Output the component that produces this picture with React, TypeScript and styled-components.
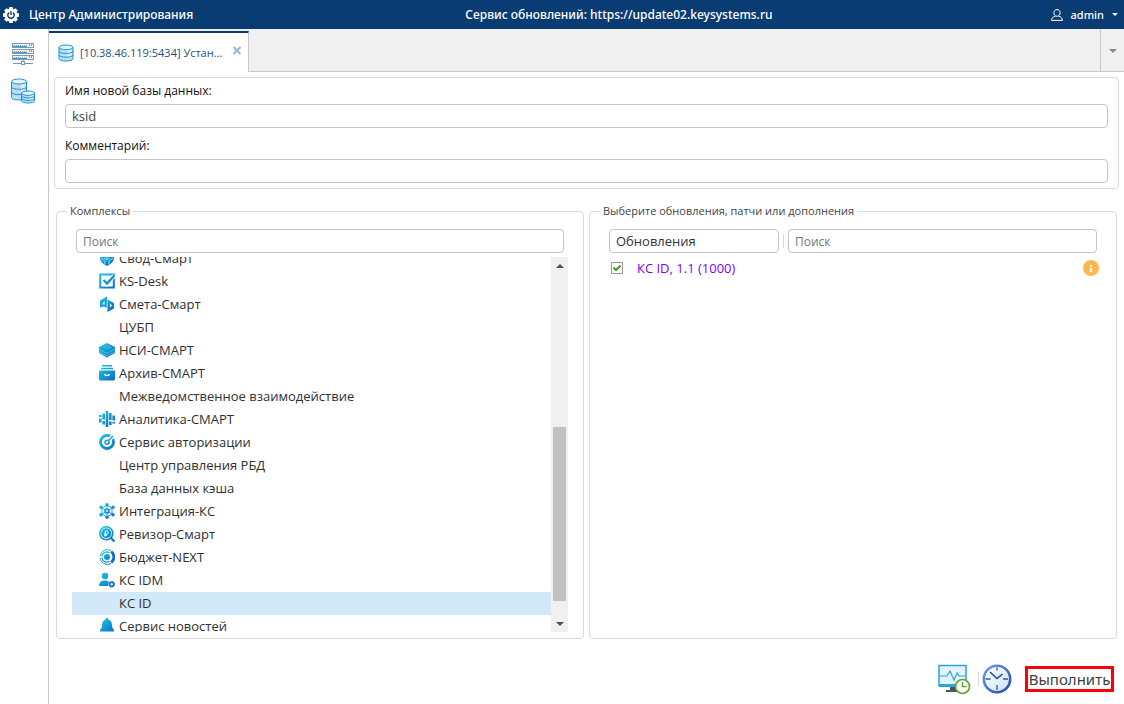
import React, { ReactNode, useLayoutEffect, useRef, useState } from "react";
import styled, { createGlobalStyle } from "styled-components";

const GlobalStyle = createGlobalStyle`
  *, *::before, *::after { box-sizing: border-box; }
  body {
    margin: 0;
    background: #fff;
    color: #333;
    font: 13px/18px "Open Sans", "Noto Sans", sans-serif;
  }
  button, input, select { font: inherit; color: inherit; }
`;

const Page = styled.div`
  display: flex;
  flex-direction: column;
  height: 100vh;
`;

const Header = styled.header`
  display: flex;
  justify-content: space-between;
  align-items: center;
  height: 29px;
  flex: none;
  padding: 0 6px 0 3px;
  background: #0a3c74;
  color: #fff;
  font-family: "Noto Sans", "Open Sans", sans-serif;
  font-size: 12px;
  font-weight: 500;
`;

const Brand = styled.div`
  display: flex;
  align-items: center;
  gap: 10px;
`;

const UserButton = styled.button`
  display: flex;
  align-items: center;
  gap: 8px;
  padding: 0 0 0 6px;
  border: 0;
  background: none;
  font-size: 11px;
`;

const Body = styled.div`
  display: flex;
  flex: 1;
  min-height: 0;
`;

const Sidebar = styled.nav`
  display: flex;
  flex-direction: column;
  align-items: center;
  gap: 13px;
  width: 49px;
  flex: none;
  padding: 14px 2px 0 0;
  border-right: 1px solid #c8c8c8;
`;

const IconButton = styled.button`
  display: flex;
  padding: 0;
  border: 0;
  background: none;
`;

const Main = styled.main`
  display: flex;
  flex-direction: column;
  flex: 1;
  min-width: 0;
`;

const TabBar = styled.div`
  display: flex;
  height: 43px;
  flex: none;
  background: linear-gradient(#c8c8c8, #c8c8c8) bottom / 100% 1px no-repeat #f0f0f0;
`;

const Tab = styled.div`
  display: flex;
  align-items: center;
  width: 200px;
  margin-top: 2px;
  padding: 0 6px 0 9px;
  border-top: 2px solid #0a3c74;
  border-right: 1px solid #c8c8c8;
  background: #fff;
  color: #1f4e7f;
`;

const TabTitle = styled.span`
  flex: 1;
  min-width: 0;
  margin-left: 6px;
  white-space: nowrap;
  font-size: 11px;
`;

const TabClose = styled(IconButton)`
  margin-bottom: 4px;
`;

const TabMenu = styled.button`
  display: flex;
  align-items: center;
  justify-content: center;
  width: 24px;
  margin-left: auto;
  padding: 0;
  border: 0;
  border-left: 1px solid #c8c8c8;
  background: none;
`;

const DatabaseForm = styled.form`
  display: flex;
  flex-direction: column;
  gap: 9px;
  flex: none;
  margin: 5px 5px 0;
  padding: 4px 10px 5px;
  border: 1px solid #dadada;
  border-radius: 4px;
`;

const Field = styled.label`
  display: flex;
  flex-direction: column;
  gap: 4px;
  color: #111;
  font-size: 12px;
`;

const TextInput = styled.input`
  width: 100%;
  min-width: 0;
  height: 24px;
  padding: 0 6px;
  border: 1px solid #c4c4c4;
  border-radius: 4px;
  outline: 0;
  background: #fff;
  color: #404040;
  font-size: 13px;
  &::placeholder { color: #757575; opacity: 1; }
`;

const SearchInput = styled(TextInput)`
  font-size: 12px;
`;

const Panels = styled.div`
  display: grid;
  grid-template-columns: 1fr 1fr;
  gap: 5px;
  flex: 1;
  min-height: 0;
  padding: 13px 7px 0;
`;

const Panel = styled.fieldset`
  display: flex;
  flex-direction: column;
  min-width: 0;
  min-height: 0;
  margin: 0;
  padding: 9px 15px 6px;
  border: 1px solid #dadada;
  border-radius: 4px;
`;

const PanelTitle = styled.legend`
  margin-left: -5px;
  padding: 0 3px;
  font-size: 11px;
  line-height: 18px;
  color: #444;
`;

const SearchRow = styled.div`
  display: flex;
  align-items: center;
  flex: none;
  padding: 0 4px;
`;

const KindSelect = styled.select`
  width: 170px;
  height: 24px;
  flex: none;
  padding: 0 6px;
  border: 1px solid #c4c4c4;
  border-radius: 4px;
  appearance: none;
  background: #fff;
  color: #333;
`;

const Separator = styled.span`
  width: 1px;
  height: 14px;
  flex: none;
  margin: 0 4px;
  background: #dadada;
`;

const ListArea = styled.div`
  display: flex;
  flex: 1;
  min-height: 0;
  margin-top: 4px;
`;

const List = styled.ul`
  flex: 1;
  min-width: 0;
  margin: 0;
  padding: 0;
  list-style: none;
  overflow-y: scroll;
  scrollbar-width: none;
`;

const ListRow = styled.li<{ $selected: boolean }>`
  display: grid;
  grid-template-columns: 16px 1fr;
  align-items: center;
  gap: 4px;
  height: 23px;
  padding: 0 0 1px 27px;
  background: ${(p) => (p.$selected ? "#d2e9f9" : "transparent")};
  color: #303030;
`;

const RowText = styled.span`
  grid-column: 2;
`;

const ScrollTrack = styled.div`
  display: flex;
  flex-direction: column;
  align-items: center;
  width: 17px;
  flex: none;
  background: #f0f0f0;
`;

const ScrollSpace = styled.div<{ $grow: number }>`
  flex: ${(p) => p.$grow};
`;

const ScrollThumb = styled.div`
  width: 13px;
  flex: 174;
  background: #c1c1c1;
`;

const ScrollButton = styled.button`
  display: flex;
  align-items: center;
  justify-content: center;
  width: 17px;
  height: 17px;
  flex: none;
  padding: 0;
  border: 0;
  background: none;
`;

const UpdateRow = styled.div`
  display: flex;
  align-items: center;
  justify-content: space-between;
  height: 30px;
  padding: 0 2px 0 6px;
`;

const UpdateLabel = styled.label`
  display: flex;
  align-items: center;
  gap: 14px;
  color: #7a00ff;
`;

const Checkbox = styled.input`
  width: 12px;
  height: 12px;
  margin: 0;
  border: 1px solid #999;
  appearance: none;
  background: #fff;
`;

const CheckHolder = styled.span`
  display: grid;
  & > * { grid-area: 1 / 1; }
  & > svg { pointer-events: none; visibility: hidden; }
  & > input:checked + svg { visibility: visible; }
`;

const Footer = styled.footer`
  display: flex;
  align-items: center;
  justify-content: flex-end;
  height: 65px;
  flex: none;
  padding: 15px 10px 0 0;
`;

const FooterSeparator = styled(Separator)`
  margin: 0 3px 0 7px;
`;

const RunButton = styled.button`
  height: 26px;
  min-width: 89px;
  margin-left: 13px;
  padding: 0;
  border: 3px solid #fb0007;
  background: #fff;
  color: #404040;
  font-family: "Noto Sans", "Open Sans", sans-serif;
  font-size: 15px;
  line-height: 18px;
`;

const Caret = ({ color, up = false, w = 8 }: { color: string; up?: boolean; w?: number }) => (
  <svg width={w} height={w / 2} viewBox="0 0 8 4" aria-hidden="true">
    <path d={up ? "M0 4L4 0l4 4z" : "M0 0h8L4 4z"} fill={color} />
  </svg>
);

const GearPower = () => (
  <svg width="16" height="16" viewBox="0 0 16 16" aria-hidden="true">
    <circle cx="8" cy="8" r="6.3" fill="#fff" />
    <g fill="#fff">
      {[0, 45, 90, 135, 180, 225, 270, 315].map((a) => (
        <path key={a} d="M6.3 0h3.4l.5 3H5.8z" transform={`rotate(${a} 8 8)`} />
      ))}
    </g>
    <path d="M6 5.600a3.200 3.200 0 1 0 4 0" fill="none" stroke="#0a3c74" strokeWidth="1.400" />
    <path d="M8 4.300v3.800" stroke="#0a3c74" strokeWidth="1.400" />
  </svg>
);

const UserGlyph = () => (
  <svg width="12" height="12" viewBox="0 0 12 12" fill="none" stroke="#fff" aria-hidden="true">
    <path d="M6 .6c2 0 3.1 1.300 3.100 3.200S7.900 7.300 6 7.300 2.900 5.700 2.900 3.800 4 .6 6 .6z" />
    <path d="M4.300 7.200C2 7.800.8 8.800.6 11.400h10.800c-.2-2.600-1.400-3.600-3.700-4.200" />
  </svg>
);

const Cylinder = ({ x, y, w, h }: { x: number; y: number; w: number; h: number }) => {
  const r = w / 2;
  const ry = w / 6;
  const arc = (cy: number) => `M${x} ${cy}a${r} ${ry} 0 0 0 ${w} 0`;
  const top = y + ry;
  const bottom = y + h - ry;
  const step = (bottom - top) / 3;
  return (
    <g stroke="#2093d6" fill="none">
      <path d={`M${x} ${top}V${bottom}a${r} ${ry} 0 0 0 ${w} 0V${top}z`} fill="#b9def5" />
      <path d={`M${x + w * 0.62} ${top}h${w * 0.26}v${h - ry * 2.4}h${-w * 0.26}z`} fill="#dff1fb" stroke="none" />
      <ellipse cx={x + r} cy={top} rx={r} ry={ry} fill="#e6f4fc" />
      <path d={arc(top + step)} />
      <path d={arc(top + step * 2)} />
    </g>
  );
};

const DatabaseGlyph = () => (
  <svg width="16" height="18" viewBox="0 0 16 18" aria-hidden="true">
    <Cylinder x={1} y={1} w={14} h={16} />
  </svg>
);

const DatabasesGlyph = () => (
  <svg width="26" height="26" viewBox="0 0 26 26" aria-hidden="true">
    <Cylinder x={1.5} y={1} w={15} h={21} />
    <Cylinder x={11.5} y={13} w={13} h={12} />
  </svg>
);

const ServersGlyph = () => (
  <svg width="22" height="22" viewBox="0 0 22 22" aria-hidden="true">
    {[0, 6, 12].map((y) => (
      <g key={y}>
        <rect x="0" y={y} width="22" height="5" fill="#8699a8" />
        <rect x="1" y={y + 1} width="20" height="3" fill="#eef3f7" />
        <path d={`M2 ${y + 2.5}h5`} stroke="#8699a8" strokeDasharray="1 1" />
        <path d={`M8 ${y + 2.5}h7`} stroke="#9fb0bd" strokeDasharray="1 1" />
        <path d={`M1 ${y + 3.5}h14`} stroke="#2f9fe2" />
        <path d={`M17 ${y + 2}h1`} stroke="#62b0e0" strokeWidth="2" />
        <path d={`M19 ${y + 2}h1`} stroke="#e8795c" strokeWidth="2" />
      </g>
    ))}
    <path d="M11 17v2M1 20.500h8m4 0h8" stroke="#8094a5" />
    <rect x="9.500" y="18.500" width="3" height="3" fill="#fff" stroke="#8094a5" />
  </svg>
);

const CloseGlyph = () => (
  <svg width="10" height="9" viewBox="0 0 10 9" aria-hidden="true">
    <path d="M1.500 1l7 7m0-7l-7 7" stroke="#9eb1c7" strokeWidth="2" />
  </svg>
);

const CheckGlyph = () => (
  <svg width="12" height="12" viewBox="0 0 12 12" aria-hidden="true">
    <path d="M2.500 5.500l2.500 2.500 4.500-4.500" fill="none" stroke="#4f9a1c" strokeWidth="2.200" />
  </svg>
);

const InfoGlyph = () => (
  <svg width="16" height="16" viewBox="0 0 16 16" aria-hidden="true">
    <circle cx="8" cy="8" r="8" fill="#ffb74d" />
    <path d="M7 5h2v1.500H7zM7 8h2v4H7z" fill="#fff" stroke="#fff" strokeWidth=".3" />
  </svg>
);

const MonitorGlyph = () => (
  <svg width="33" height="31" viewBox="0 0 33 31" aria-hidden="true">
    <path d="M12 22h6v4h3v2H8v-2h4z" fill="#4b5258" />
    <rect x="1" y="1.500" width="27" height="20" fill="#e3f5fe" stroke="#2ba3dd" strokeWidth="1.500" />
    <path d="M1 21.500h27" stroke="#2ba3dd" strokeWidth="3" />
    <path d="M2 12h7l3-5 4 9 3-7 2 3h6" fill="none" stroke="#2ba3dd" strokeWidth="1.200" />
    <circle cx="24.500" cy="22.500" r="7" fill="#fff" stroke="#62a331" strokeWidth="1.700" />
    <path d="M24.500 18V22.500h4" fill="none" stroke="#62a331" strokeWidth="1.500" />
  </svg>
);

const ClockGlyph = () => (
  <svg width="30" height="30" viewBox="0 0 30 30" aria-hidden="true">
    <defs>
      <linearGradient id="clock-rim" x1="0" y1="0" x2="1" y2="1">
        <stop offset="0" stopColor="#6f9dea" />
        <stop offset="1" stopColor="#244aa6" />
      </linearGradient>
      <linearGradient id="clock-face" x1="0" y1="0" x2="1" y2="1">
        <stop offset="0" stopColor="#fff" />
        <stop offset="1" stopColor="#c9e3f8" />
      </linearGradient>
    </defs>
    <circle cx="15" cy="15" r="13.200" fill="url(#clock-face)" stroke="url(#clock-rim)" strokeWidth="2.600" />
    <path d="M15 3.500v3M15 21v5M3.500 15h5M21 15h5" stroke="#35589f" strokeWidth="1.300" />
    <path d="M8 8l7 6.500L20.500 10" fill="none" stroke="#23499b" strokeWidth="1.600" />
  </svg>
);

const G = "url(#product-blue)";

const ProductIcon = ({ children }: { children: ReactNode }) => (
  <svg width="16" height="16" viewBox="0 0 16 16" fill={G} aria-hidden="true">
    <defs>
      <linearGradient id="product-blue" gradientUnits="userSpaceOnUse" x1="2" y1="1" x2="14" y2="15">
        <stop offset="0" stopColor="#1cc4dc" />
        <stop offset="1" stopColor="#0a70c9" />
      </linearGradient>
    </defs>
    {children}
  </svg>
);

const icons: Record<string, ReactNode> = {
  shield: (
    <>
      <path d="M1 2l7 3 7-3v6c0 3-3 6-7 8-4-2-7-5-7-8z" />
      <path d="M2 8l4 3v3M14 8l-4 3v3M8 6v4l-3-2m3 2l3-2" fill="none" stroke="#a6e2f4" strokeWidth=".9" />
    </>
  ),
  check: (
    <>
      <path d="M1.200 1.500h13.600v13H1.200z" fill="none" stroke={G} strokeWidth="2" />
      <path d="M4.500 7l3.500 4 7-8.500" fill="none" stroke="#fff" strokeWidth="4" />
      <path d="M4.500 7l3.500 3.500 7.300-8" fill="none" stroke={G} strokeWidth="2.400" />
    </>
  ),
  book: (
    <>
      <path d="M1 4.500L8 .5v4L7.500 12 5 10.500l-4 1z" />
      <path d="M8.500 3.500L15 7v5.500L8.500 16z" />
      <path d="M5.500 5v4L3.500 8zM11 7.500v4l2-2z" fill="#fff" />
    </>
  ),
  layers: (
    <>
      <path d="M0 5l8-4 8 4v6l-8 4.500L0 11z" />
      <path d="M0 7.300l8 4 8-4M0 9.700l8 4 8-4M4 4.500l6 3m-3.500-4.500l5.500 3" fill="none" stroke="#77d6ee" strokeWidth=".6" />
    </>
  ),
  archive: (
    <>
      <path d="M3 0h10v1.500H3zM2 2.700h12v1.500H2zM1 5.500h14c.6 0 1 .4 1 1V14c0 .8-.7 1.500-1.500 1.500h-13C.7 15.500 0 14.800 0 14V6.500c0-.6.4-1 1-1z" />
      <path d="M5.500 9.200c.5 1.600 4.500 1.600 5 0" fill="none" stroke="#fff" strokeWidth="1.500" />
    </>
  ),
  bars: (
    <path
      d="M1.300 4v2m0 1.500v4M4.700 2.500v6m0 1.500v3.500M8 0v16M11.300 2v7m0 1.500V14M14.700 4.500v5m0 1.500v1.500"
      fill="none"
      stroke={G}
      strokeWidth="2.600"
    />
  ),
  gauge: (
    <>
      <circle cx="8" cy="8" r="6.500" fill="none" stroke={G} strokeWidth="2.800" />
      <path d="M8 8l7-7" stroke="#fff" strokeWidth="4" />
      <circle cx="8" cy="8.300" r="2" fill="none" stroke={G} strokeWidth="1.500" />
      <path d="M9 7l5-5" stroke={G} strokeWidth="1.500" />
    </>
  ),
  network: (
    <>
      <path d="M8 2l5 3v6l-5 3-5-3V5zM8 2v12M3 5l10 6M13 5L3 11" fill="none" stroke={G} strokeWidth=".9" />
      <circle cx="8" cy="8" r="2.800" />
      {[[8, 1.7], [2, 4.3], [14, 4.3], [2, 11.7], [14, 11.7], [8, 14.3]].map(([x, y]) => (
        <circle key={`${x}-${y}`} cx={x} cy={y} r="1.700" />
      ))}
      <circle cx="8" cy="8" r=".9" fill="#fff" />
    </>
  ),
  lens: (
    <>
      <circle cx="7.300" cy="7.300" r="6.500" fill="none" stroke={G} strokeWidth="1.600" />
      <circle cx="7.300" cy="7.300" r="5" />
      <path d="M11.500 11.500l4 4" stroke={G} strokeWidth="2.200" />
      <path d="M6.200 10.500V5h1.600a1.500 1.500 0 0 1 0 3H5.200m0 1.200h3" fill="none" stroke="#fff" />
    </>
  ),
  target: (
    <>
      <path d="M12 1.600A7.400 7.400 0 1 0 12 14.400" fill="none" stroke={G} strokeWidth="1" />
      <path d="M10.500 3.800a5 5 0 1 0 0 8.400" fill="none" stroke={G} strokeWidth="1.200" />
      <path d="M12.200 2.500a7 7 0 0 1 0 11" fill="none" stroke="#0a70c9" strokeWidth="2.800" />
      <circle cx="8" cy="8" r="3" />
      <path d="M0 8h3" stroke="#fff" strokeWidth="1.500" />
    </>
  ),
  userGear: (
    <>
      <circle cx="6" cy="4" r="3.200" />
      <path d="M0 14c0-3.500 2-5.500 5.500-5.500 2 0 3.500.5 4.500 1.500-1 1.200-1 2.800-.5 4z" />
      <circle cx="12.700" cy="12.200" r="2" fill="none" stroke="#0a70c9" strokeWidth="1.600" />
      <circle cx="12.700" cy="12.200" r="3" fill="none" stroke="#0a70c9" strokeDasharray="1.400 1" />
    </>
  ),
  bell: (
    <path d="M8 0c.8 0 1.200.5 1.200 1.200C12 2 13 4.500 13 7.500c0 2 1 3 2 4.500v1.500H1V12c1-1.500 2-2.500 2-4.500 0-3 1-5.500 3.800-6.300C6.800.5 7.200 0 8 0zM6 14.500h4c-.3 1-1 1.500-2 1.500s-1.700-.5-2-1.500z" />
  ),
};

const products: { name: string; icon?: string }[] = [
  { name: "Свод-Смарт", icon: "shield" },
  { name: "KS-Desk", icon: "check" },
  { name: "Смета-Смарт", icon: "book" },
  { name: "ЦУБП" },
  { name: "НСИ-СМАРТ", icon: "layers" },
  { name: "Архив-СМАРТ", icon: "archive" },
  { name: "Межведомственное взаимодействие" },
  { name: "Аналитика-СМАРТ", icon: "bars" },
  { name: "Сервис авторизации", icon: "gauge" },
  { name: "Центр управления РБД" },
  { name: "База данных кэша" },
  { name: "Интеграция-КС", icon: "network" },
  { name: "Ревизор-Смарт", icon: "lens" },
  { name: "Бюджет-NEXT", icon: "target" },
  { name: "КС IDM", icon: "userGear" },
  { name: "КС ID" },
  { name: "Сервис новостей", icon: "bell" },
];

export default function App() {
  const listRef = useRef<HTMLUListElement>(null);
  const [selected, setSelected] = useState("КС ID");

  useLayoutEffect(() => {
    if (listRef.current) listRef.current.scrollTop = 10;
  }, []);

  return (
    <>
      <GlobalStyle />
      <Page>
        <Header>
          <Brand>
            <GearPower />
            <span>Центр Администрирования</span>
          </Brand>
          <span>Сервис обновлений: https://update02.keysystems.ru</span>
          <UserButton>
            <UserGlyph />
            <span>admin</span>
            <Caret color="#fff" w={6} />
          </UserButton>
        </Header>
        <Body>
          <Sidebar>
            <IconButton aria-label="Серверы"><ServersGlyph /></IconButton>
            <IconButton aria-label="Базы данных"><DatabasesGlyph /></IconButton>
          </Sidebar>
          <Main>
            <TabBar>
              <Tab>
                <DatabaseGlyph />
                <TabTitle>[10.38.46.119:5434] Устан...</TabTitle>
                <TabClose aria-label="Закрыть"><CloseGlyph /></TabClose>
              </Tab>
              <TabMenu aria-label="Вкладки"><Caret color="#8a8a8a" /></TabMenu>
            </TabBar>
            <DatabaseForm>
              <Field>
                Имя новой базы данных:
                <TextInput defaultValue="ksid" />
              </Field>
              <Field>
                Комментарий:
                <TextInput />
              </Field>
            </DatabaseForm>
            <Panels>
              <Panel>
                <PanelTitle>Комплексы</PanelTitle>
                <SearchRow>
                  <SearchInput placeholder="Поиск" aria-label="Поиск комплекса" />
                </SearchRow>
                <ListArea>
                  <List ref={listRef}>
                    {products.map(({ name, icon }) => (
                      <ListRow key={name} $selected={name === selected} onClick={() => setSelected(name)}>
                        {icon && <ProductIcon>{icons[icon]}</ProductIcon>}
                        <RowText>{name}</RowText>
                      </ListRow>
                    ))}
                  </List>
                  <ScrollTrack>
                    <ScrollButton aria-label="Вверх"><Caret color="#505050" up /></ScrollButton>
                    <ScrollSpace $grow={153} />
                    <ScrollThumb />
                    <ScrollSpace $grow={14} />
                    <ScrollButton aria-label="Вниз"><Caret color="#505050" /></ScrollButton>
                  </ScrollTrack>
                </ListArea>
              </Panel>
              <Panel>
                <PanelTitle>Выберите обновления, патчи или дополнения</PanelTitle>
                <SearchRow>
                  <KindSelect aria-label="Тип">
                    <option>Обновления</option>
                  </KindSelect>
                  <Separator />
                  <SearchInput placeholder="Поиск" aria-label="Поиск обновления" />
                </SearchRow>
                <UpdateRow>
                  <UpdateLabel>
                    <CheckHolder>
                      <Checkbox type="checkbox" defaultChecked />
                      <CheckGlyph />
                    </CheckHolder>
                    КС ID, 1.1 (1000)
                  </UpdateLabel>
                  <IconButton aria-label="Сведения"><InfoGlyph /></IconButton>
                </UpdateRow>
              </Panel>
            </Panels>
            <Footer>
              <IconButton aria-label="Монитор задач"><MonitorGlyph /></IconButton>
              <FooterSeparator />
              <IconButton aria-label="Расписание"><ClockGlyph /></IconButton>
              <RunButton>Выполнить</RunButton>
            </Footer>
          </Main>
        </Body>
      </Page>
    </>
  );
}
